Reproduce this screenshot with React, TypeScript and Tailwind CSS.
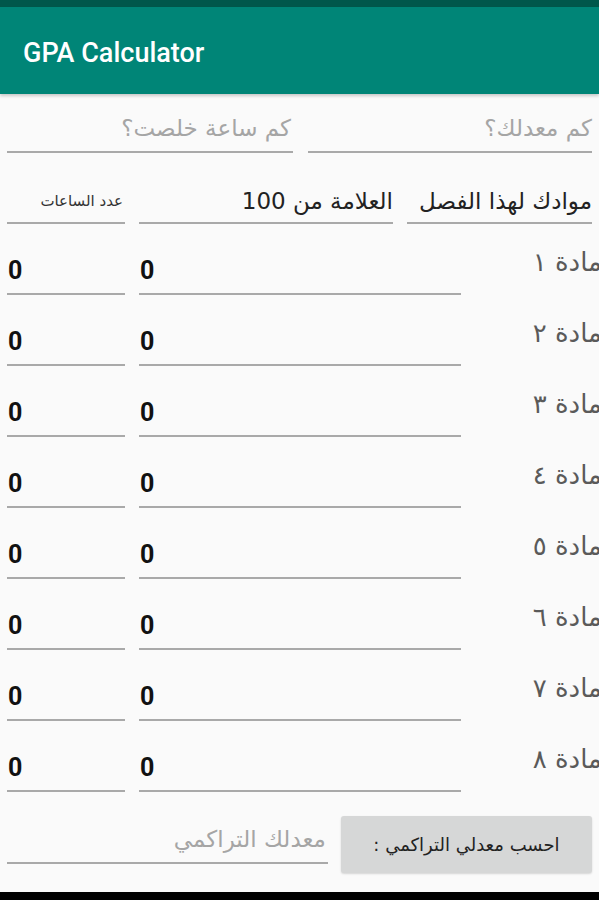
import React from "react";

const arabicNums = ["١", "٢", "٣", "٤", "٥", "٦", "٧", "٨"];

const Field = ({ className, children }: { className: string; children?: React.ReactNode }) => (
    <div className={`border-b-2 border-[#a9a9a9] flex items-center ${className}`}>{children}</div>
);

const App = () => {
    return (
        <div className="w-[599px] h-[900px] bg-[#fafafa] flex flex-col overflow-hidden font-['DejaVu_Sans',sans-serif]">
            <div className="h-[7px] bg-[#00574b]" />
            <div className="h-[87px] bg-[#008577] flex items-center pl-[23px] shadow-[0_2px_3px_rgba(0,0,0,0.2)]">
                <span className="text-white text-[27px] font-medium font-['Roboto',sans-serif] mt-[6px]">GPA Calculator</span>
            </div>

            {/* top inputs */}
            <div className="flex gap-[15px] px-[7px] pt-[11px]">
                <Field className="flex-1 h-[48px] justify-end pr-[2px]">
                    <span dir="rtl" className="text-[23px] text-[#a5a5a5]">كم ساعة خلصت؟</span>
                </Field>
                <Field className="flex-1 h-[48px] justify-end">
                    <span dir="rtl" className="text-[23px] text-[#a5a5a5]">كم معدلك؟</span>
                </Field>
            </div>

            {/* headers */}
            <div className="flex px-[7px] pt-[27px]">
                <Field className="w-[118px] h-[44px] justify-end pr-[2px]">
                    <span dir="rtl" className="text-[15px] text-[#333]">عدد الساعات</span>
                </Field>
                <Field className="w-[254px] ml-[14px] h-[44px] justify-end">
                    <span dir="rtl" className="text-[23px] text-[#222]">العلامة من 100</span>
                </Field>
                <Field className="flex-1 ml-[14px] h-[44px] justify-end">
                    <span dir="rtl" className="text-[23px] text-[#222]">موادك لهذا الفصل</span>
                </Field>
            </div>

            {/* subjects */}
            <div className="flex flex-col">
                {arabicNums.map((n) => (
                    <div key={n} className="flex h-[71px] pl-[7px]">
                        <div className="flex items-end">
                            <Field className="w-[118px] h-[48px] pl-[1px]">
                                <span className="text-[25px] font-bold font-['Roboto',sans-serif] text-[#111] mt-[2px]">0</span>
                            </Field>
                            <Field className="w-[322px] ml-[14px] h-[48px] pl-[1px]">
                                <span className="text-[25px] font-bold font-['Roboto',sans-serif] text-[#111] mt-[2px]">0</span>
                            </Field>
                        </div>
                        <div className="flex-1 flex justify-end pt-[21px] mr-[-3px]">
                            <span dir="rtl" className="text-[26px] leading-[34px] text-[#5a5a5a] whitespace-nowrap">مادة {n}</span>
                        </div>
                    </div>
                ))}
            </div>

            {/* bottom */}
            <div className="flex items-start px-[7px] pt-[24px]">
                <Field className="w-[322px] h-[48px] justify-end pr-[2px]">
                    <span dir="rtl" className="text-[23px] text-[#a5a5a5]">معدلك التراكمي</span>
                </Field>
                <button className="ml-[13px] w-[252px] h-[57px] bg-[#d6d7d7] rounded-[3px] shadow-[0_1px_2px_rgba(0,0,0,0.15)] flex items-center justify-center">
                    <span dir="rtl" className="text-[18px] text-[#222]">احسب معدلي التراكمي :</span>
                </button>
            </div>
            <div className="flex-1" />
            <div className="h-[8px] bg-black" />
        </div>
    );
};

export default App;
